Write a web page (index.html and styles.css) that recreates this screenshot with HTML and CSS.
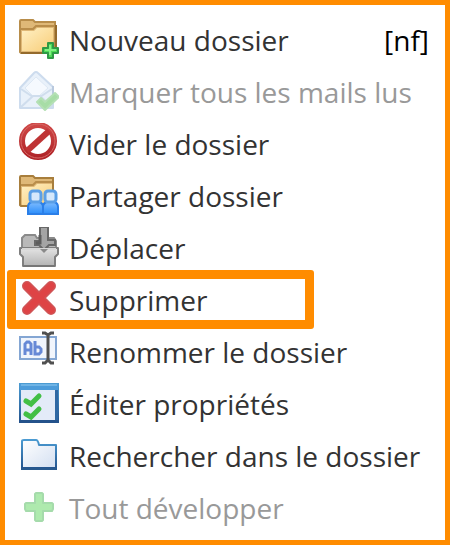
FILE: index.html
```html
<!DOCTYPE html>
<html lang="fr">
<head>
  <meta charset="UTF-8">
  <meta name="viewport" content="width=device-width, initial-scale=1.0">
  <title>Menu dossier</title>
  <link rel="stylesheet" href="styles.css">
</head>
<body>
  <!-- Shared gradients -->
  <svg class="defs" width="0" height="0" aria-hidden="true">
    <defs>
      <linearGradient id="folder" x1="0" y1="0" x2="1" y2="1">
        <stop offset="0" stop-color="#fff0c4"/>
        <stop offset="1" stop-color="#f8cd78"/>
      </linearGradient>
      <linearGradient id="paper" x1="0" y1="0" x2="1" y2="1">
        <stop offset="0" stop-color="#ffffff"/>
        <stop offset="1" stop-color="#d3dff1"/>
      </linearGradient>
      <linearGradient id="blueLine" x1="0" y1="0" x2="0" y2="1">
        <stop offset="0" stop-color="#4b9bd2"/>
        <stop offset="1" stop-color="#24558f"/>
      </linearGradient>
      <linearGradient id="person" x1="0" y1="0" x2="0" y2="1">
        <stop offset="0" stop-color="#7fbcff"/>
        <stop offset="1" stop-color="#2a8dfa"/>
      </linearGradient>
      <linearGradient id="red" x1="0" y1="0" x2="0" y2="1">
        <stop offset="0" stop-color="#ce4746"/>
        <stop offset="1" stop-color="#b02428"/>
      </linearGradient>
      <linearGradient id="tray" x1="0" y1="0" x2="0" y2="1">
        <stop offset="0" stop-color="#e4e4e4"/>
        <stop offset="1" stop-color="#b4b4b4"/>
      </linearGradient>
    </defs>
  </svg>

  <div class="menu">
    <button type="button" class="item">
      <svg class="icon" viewBox="0 0 40 40" aria-hidden="true">
        <path d="M1 33V2Q1 1 2 1H14L16 3H36V32L34 34H2Z" fill="#dfb877" stroke="#b88d4a" stroke-width="2"/>
        <path d="M2 10H14L17 7H35" fill="none" stroke="#b98d4a" stroke-width="2"/>
        <path d="M3 12H15L18 9H34V32H3Z" fill="url(#folder)"/>
        <path d="M2 34H34L37 31V6" fill="none" stroke="#946a2c" stroke-width="2"/>
        <path d="M29 24H34V29H39V34H34V39H29V34H24V29H29Z" fill="#4ddc55" stroke="#2f9a45" stroke-width="2" stroke-linejoin="round"/>
        <path d="M31 26V36M26 31H37" stroke="#83f183" stroke-width="2"/>
      </svg>
      <span class="label">Nouveau dossier</span>
      <kbd class="shortcut">[nf]</kbd>
    </button>
    <button type="button" class="item" disabled>
      <svg class="icon" viewBox="0 0 40 40" aria-hidden="true">
        <path d="M1 17L15 2Q17 0 19 2L34 16V37H1Z" fill="#e9f1fa" stroke="#cddcee" stroke-width="2" stroke-linejoin="round"/>
        <path d="M6 17L17 6L29 17L20 25H14Z" fill="#f5f9fe" stroke="#dde8f4"/>
        <path d="M2 18L14 26M33 18L21 26M2 36L14 25H21L33 36" fill="none" stroke="#cfdded" stroke-width="2"/>
        <path d="M34 15V28" stroke="#b9c9de" stroke-width="2"/>
        <path d="M18 31L22 27L26 31L36 22L40 26L26 39Z" fill="#a7dda6" stroke="#b4e0b4" stroke-width="2" stroke-linejoin="round"/>
      </svg>
      <span class="label">Marquer tous les mails lus</span>
    </button>
    <button type="button" class="item">
      <svg class="icon" viewBox="0 0 40 40" aria-hidden="true">
        <circle cx="19" cy="18" r="16" fill="none" stroke="url(#red)" stroke-width="6"/>
        <path d="M8 28L30 8" stroke="#bf3435" stroke-width="6"/>
        <circle cx="19" cy="18" r="17" fill="none" stroke="#d76865" stroke-width="1"/>
      </svg>
      <span class="label">Vider le dossier</span>
    </button>
    <button type="button" class="item">
      <svg class="icon" viewBox="0 0 40 40" aria-hidden="true">
        <path d="M1 30V2Q1 1 2 1H14L16 3H34V31H2Z" fill="#dfb877" stroke="#a87e3c" stroke-width="2"/>
        <path d="M2 10H14L17 7H33" fill="none" stroke="#b98d4a" stroke-width="2"/>
        <path d="M3 12H15L18 9H33V30H3Z" fill="url(#folder)"/>
        <path d="M9 39V32Q9 28 13 27H20Q24 28 24 32V39Z" fill="url(#person)" stroke="#2b7fe8" stroke-width="2"/>
        <path d="M24 39V32Q24 28 28 27H35Q39 28 39 32V39Z" fill="url(#person)" stroke="#2b7fe8" stroke-width="2"/>
        <rect x="11" y="16" width="11" height="11" rx="3" fill="#d5e8fb" stroke="#5b9fe6" stroke-width="3"/>
        <rect x="26" y="16" width="11" height="11" rx="3" fill="#d5e8fb" stroke="#5b9fe6" stroke-width="3"/>
      </svg>
      <span class="label">Partager dossier</span>
    </button>
    <button type="button" class="item">
      <svg class="icon" viewBox="0 0 40 40" aria-hidden="true">
        <path d="M3 21V11L6 8H16L18 11H35L37 14V21Z" fill="#b9b9b9" stroke="#8a8a8a" stroke-width="2"/>
        <path d="M1 21H39V27L36 30V39H4V30L1 27Z" fill="url(#tray)" stroke="#7f7f7f" stroke-width="2" stroke-linejoin="round"/>
        <path d="M21 0H29V13H36V18H30L25 23L20 18H16V14H21Z" fill="#a4a4a4" stroke="#686868" stroke-width="2"/>
        <path d="M17 16H21V8" fill="none" stroke="#5c5c5c" stroke-width="3"/>
        <path d="M3 22H37" stroke="#d6d6d6" stroke-width="2"/>
        <path d="M21 22H29L25 26Z" fill="#8a8a8a"/>
        <path d="M4 39H36" stroke="#777777" stroke-width="2"/>
      </svg>
      <span class="label">Déplacer</span>
    </button>
    <button type="button" class="item highlighted">
      <svg class="icon" viewBox="0 0 40 40" aria-hidden="true">
        <path d="M8 7L32 31M32 7L8 31" stroke="#cf5557" stroke-width="10" stroke-linecap="round"/>
        <path d="M8 7L32 31M32 7L8 31" stroke="#de4345" stroke-width="7" stroke-linecap="round"/>
      </svg>
      <span class="label">Supprimer</span>
    </button>
    <button type="button" class="item">
      <svg class="icon" viewBox="0 0 40 40" aria-hidden="true">
        <rect x="1" y="6" width="36" height="22" fill="#f1f5fc" stroke="#84a6d3" stroke-width="2"/>
        <path d="M6 24V13L8 11H10L12 13V24M6 19H12M16 10V23H20L22 21V18L20 16H16" fill="none" stroke="#6789d6" stroke-width="3"/>
        <path d="M23 2H26L29 4L32 2H35M29 4V30M23 32H26L29 29L32 32H35" fill="none" stroke="#505050" stroke-width="3"/>
      </svg>
      <span class="label">Renommer le dossier</span>
    </button>
    <button type="button" class="item">
      <svg class="icon" viewBox="0 0 40 40" aria-hidden="true">
        <rect x="1" y="1" width="38" height="38" fill="#e3ebf8" stroke="url(#blueLine)" stroke-width="2"/>
        <rect x="1" y="1" width="38" height="6" fill="#4d9cda"/>
        <path d="M2 2H38" stroke="#91cbf0" stroke-width="1"/>
        <rect x="36" y="7" width="3" height="32" fill="#2f68a3"/>
        <rect x="0" y="37" width="40" height="3" fill="#24528b"/>
        <path d="M7 18L12 21L20 13" fill="none" stroke="#42bf45" stroke-width="5" stroke-linecap="round"/>
        <path d="M7 31L12 34L20 26" fill="none" stroke="#42bf45" stroke-width="5" stroke-linecap="round"/>
      </svg>
      <span class="label">Éditer propriétés</span>
    </button>
    <button type="button" class="item">
      <svg class="icon" viewBox="0 0 40 40" aria-hidden="true">
        <path d="M3 33V6Q3 5 5 5H17Q19 5 20 10H37V33Z" fill="url(#paper)" stroke="url(#blueLine)" stroke-width="2" stroke-linejoin="round"/>
        <path d="M2 34H38" stroke="#28598e" stroke-width="2"/>
      </svg>
      <span class="label">Rechercher dans le dossier</span>
    </button>
    <button type="button" class="item" disabled>
      <svg class="icon" viewBox="0 0 40 40" aria-hidden="true">
        <path d="M17 6H23L24 7V16H33L34 17V22L33 24H24V33L23 34H17L16 33V24H7L6 22V17L7 16H16V7Z" fill="#aeeaae" stroke="#a5dbab" stroke-width="2" stroke-linejoin="round"/>
      </svg>
      <span class="label">Tout développer</span>
    </button>
  </div>
</body>
</html>
```

FILE: styles.css
```css
*,
*::after {
  box-sizing: border-box;
}
body {
  margin: 0;
  font-family: "Open Sans", "Noto Sans", sans-serif;
  background-color: #fff;
}
.defs {
  position: absolute;
}
.menu {
  display: flex;
  flex-direction: column;
  min-height: 100vh;
  padding: 8px 16px 7px 14px;
  border: 5px solid #ff8c00;
}
.item {
  position: relative;
  display: flex;
  align-items: center;
  gap: 10px;
  height: 52px;
  padding: 0;
  border: none;
  background: none;
  color: #333;
  font-family: inherit;
  font-size: 28px;
  line-height: 40px;
  text-align: left;
  white-space: nowrap;
  cursor: pointer;
}
.item:disabled {
  color: #999;
  cursor: default;
}
.icon {
  flex: none;
  width: 40px;
  height: 40px;
}
.label,
.shortcut {
  padding-top: 2px;
}
.shortcut {
  margin-left: auto;
  color: #000;
  font-family: inherit;
}
/* frame around the delete entry */
.highlighted::after {
  content: "";
  position: absolute;
  top: -3px;
  bottom: -4px;
  left: -12px;
  width: 307px;
  border: 9px solid #ff8c00;
  border-radius: 3px;
}
```
